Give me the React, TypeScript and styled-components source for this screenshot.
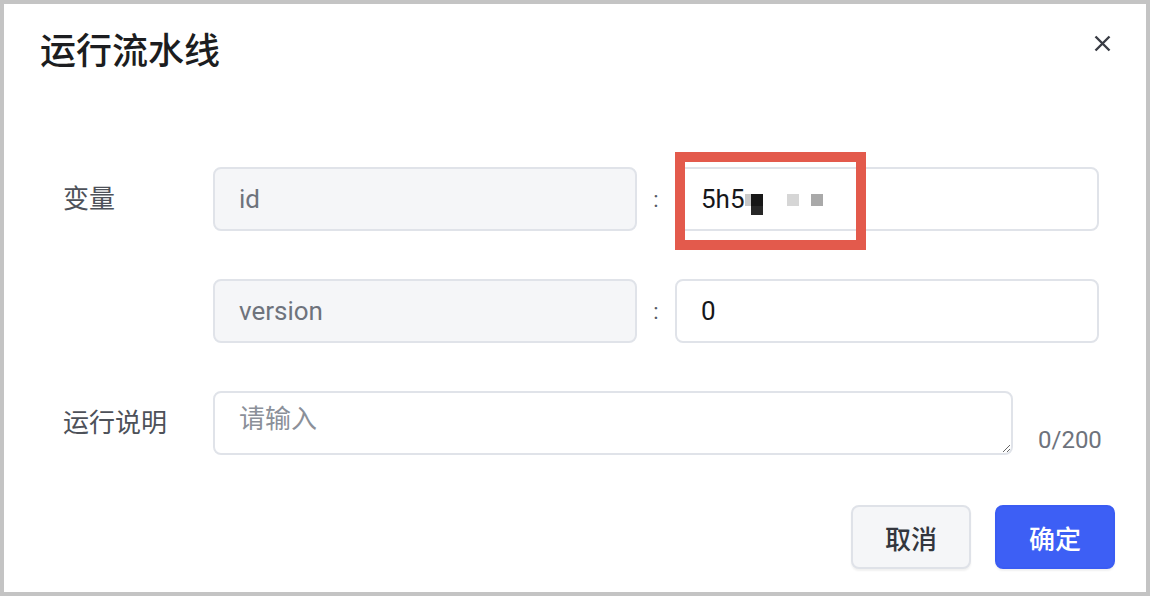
import React from "react";
import styled, { createGlobalStyle } from "styled-components";

const GlobalStyle = createGlobalStyle`
  html, body {
    margin: 0;
    padding: 0;
    background: #c4c4c4;
  }
  body {
    font-family: "Roboto", "Noto Sans CJK SC", sans-serif;
    -webkit-font-smoothing: antialiased;
  }
  * { box-sizing: border-box; }
`;

const Frame = styled.div`
  margin: 4px;
  height: 588px;
  background: #ffffff;
  display: flex;
  flex-direction: column;
`;

const Header = styled.div`
  display: flex;
  justify-content: space-between;
  align-items: flex-start;
  padding: 23px 35px 0 36px;
`;

const Title = styled.h1`
  margin: 0;
  font-size: 36px;
  line-height: 50px;
  font-weight: 500;
  color: #1c1d20;
`;

const CloseButton = styled.button`
  margin-top: 8px;
  width: 17px;
  height: 17px;
  padding: 0;
  border: none;
  background: transparent;
  display: flex;
  align-items: center;
  justify-content: center;
  cursor: pointer;
  color: #3a3d45;
`;

const Form = styled.div`
  display: flex;
  flex-direction: column;
  gap: 48px;
  padding: 90px 0 0 59px;
`;

const Row = styled.div`
  display: flex;
  align-items: center;
  min-height: 64px;
`;

const FieldLabel = styled.div`
  width: 150px;
  flex: none;
  font-size: 26px;
  color: #4d5159;
  line-height: 36px;
`;

const Field = styled.div<{ $muted?: boolean }>`
  position: relative;
  width: 424px;
  height: 64px;
  display: flex;
  align-items: center;
  padding: 0 24px;
  border: 2px solid #e0e3e9;
  border-radius: 8px;
  background: ${(p) => (p.$muted ? "#f5f6f8" : "#ffffff")};
  color: ${(p) => (p.$muted ? "#6e737c" : "#16171a")};
  font-size: 26px;
`;

const Colon = styled.div`
  width: 38px;
  flex: none;
  text-align: center;
  font-size: 22px;
  color: #555a63;
`;

const Mosaic = styled.svg`
  display: block;
  margin-top: 11px;
  flex: none;
`;

const Highlight = styled.div`
  position: absolute;
  left: -2px;
  top: -17px;
  width: 191px;
  height: 98px;
  border: 10px solid #e35a4c;
  pointer-events: none;
`;

const TextArea = styled.textarea`
  width: 800px;
  height: 64px;
  flex: none;
  margin: 0;
  padding: 8px 24px;
  border: 2px solid #e0e3e9;
  border-radius: 8px;
  font-family: "Roboto", "Noto Sans CJK SC", sans-serif;
  font-size: 26px;
  line-height: 36px;
  color: #16171a;
  outline: none;
  background: #fff;
  &::placeholder {
    color: #8b9099;
  }
`;

const Counter = styled.div`
  align-self: flex-end;
  margin-left: 25px;
  font-size: 24px;
  line-height: 30px;
  color: #6e737c;
`;

const Footer = styled.div`
  display: flex;
  justify-content: flex-end;
  gap: 24px;
  padding: 50px 31px 0 0;
`;

const Button = styled.button<{ $primary?: boolean }>`
  width: 120px;
  height: 64px;
  border-radius: 8px;
  border: 2px solid ${(p) => (p.$primary ? "#3a5cf3" : "#dfe2e8")};
  background: ${(p) => (p.$primary ? "#3d5ff5" : "#f5f6f8")};
  color: ${(p) => (p.$primary ? "#ffffff" : "#33363d")};
  font-family: "Roboto", "Noto Sans CJK SC", sans-serif;
  font-size: 26px;
  font-weight: 500;
  box-shadow: 0 2px 2px rgba(0, 0, 0, 0.06);
  cursor: pointer;
`;

export default function App() {
  return (
    <>
      <GlobalStyle />
      <Frame>
        <Header>
          <Title>运行流水线</Title>
          <CloseButton aria-label="关闭">
            <svg width="17" height="17" viewBox="0 0 17 17">
              <path
                d="M1.5 1.5 L15.5 15.5 M15.5 1.5 L1.5 15.5"
                stroke="currentColor"
                strokeWidth="2.4"
                strokeLinecap="butt"
              />
            </svg>
          </CloseButton>
        </Header>
        <Form>
          <Row>
            <FieldLabel>变量</FieldLabel>
            <Field $muted>id</Field>
            <Colon>:</Colon>
            <Field>
              5h5
              <Mosaic width="78" height="22" viewBox="0 0 78 22">
                <rect x="0" y="0" width="6" height="12" fill="#c9c9c9" />
                <rect x="6" y="0" width="12" height="12" fill="#171717" />
                <rect x="6" y="12" width="12" height="9" fill="#272727" />
                <rect x="42" y="0" width="12" height="12" fill="#d6d6d6" />
                <rect x="66" y="0" width="12" height="12" fill="#a9a9a9" />
              </Mosaic>
              <Highlight />
            </Field>
          </Row>
          <Row>
            <FieldLabel />
            <Field $muted>version</Field>
            <Colon>:</Colon>
            <Field>0</Field>
          </Row>
          <Row>
            <FieldLabel>运行说明</FieldLabel>
            <TextArea placeholder="请输入" />
            <Counter>0/200</Counter>
          </Row>
        </Form>
        <Footer>
          <Button>取消</Button>
          <Button $primary>确定</Button>
        </Footer>
      </Frame>
    </>
  );
}
